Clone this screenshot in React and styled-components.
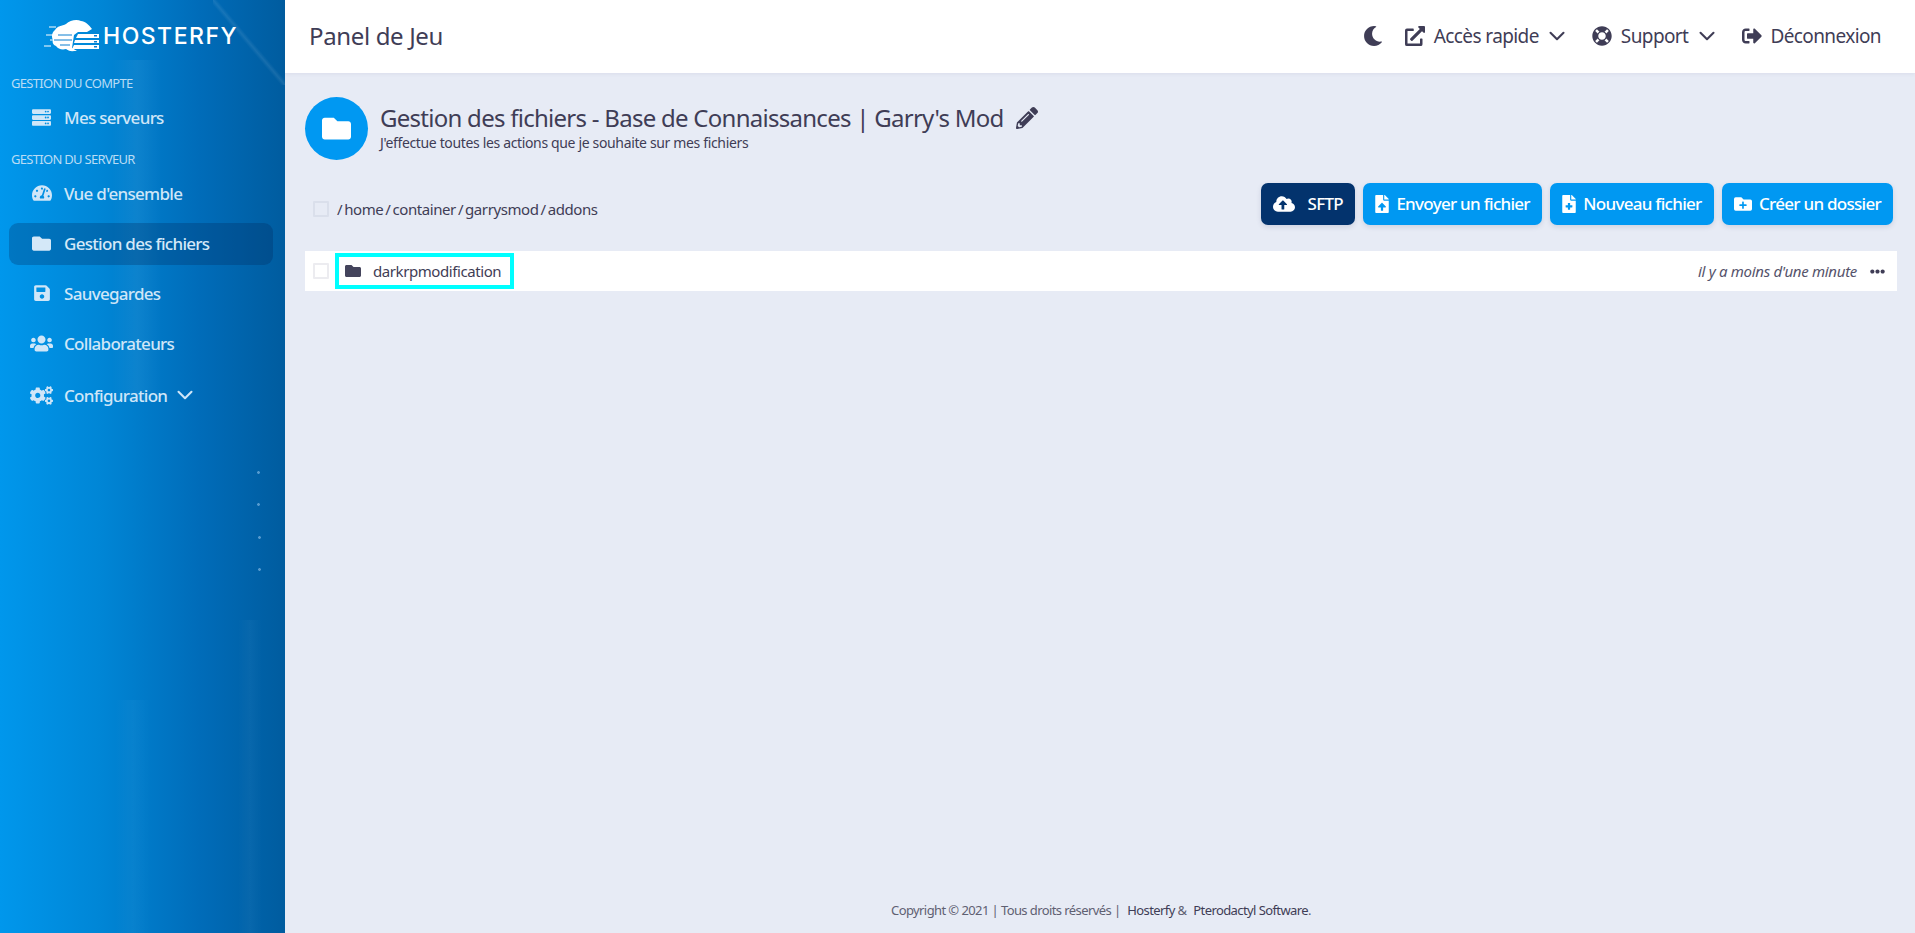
import React from 'react';
import styled, { createGlobalStyle } from 'styled-components';
import {
  FaMoon, FaExternalLinkAlt, FaLifeRing, FaSignOutAlt, FaServer, FaTachometerAlt, FaFolder,
  FaSave, FaUsers, FaCogs, FaCloudUploadAlt, FaFileUpload, FaFileMedical, FaFolderPlus,
  FaPencilAlt, FaEllipsisH,
} from 'react-icons/fa';
import { ChevronDown } from 'lucide-react';

const GlobalStyle = createGlobalStyle`
  html, body { margin: 0; padding: 0; height: 100%; }
  body { font-family: "Noto Sans", "Open Sans", sans-serif; background: #e7ebf5; color: #3f3d56; overflow: hidden; }
  * { box-sizing: border-box; }
`;

const Page = styled.div`
  display: flex;
  width: 1915px;
  height: 933px;
`;

const dot = 'radial-gradient(circle, rgba(190,225,255,0.45) 1px, transparent 1.7px)';

const Sidebar = styled.aside`
  width: 285px;
  flex: none;
  height: 100%;
  padding: 0 12px 0 9px;
  color: #cfe6f8;
  background:
    ${dot} 256px 470px / 5px 5px no-repeat,
    ${dot} 256px 502px / 5px 5px no-repeat,
    ${dot} 257px 535px / 5px 5px no-repeat,
    ${dot} 257px 567px / 5px 5px no-repeat,
    linear-gradient(to top right, transparent 47%, rgba(255,255,255,0.09) 50%, transparent 53%) 213px 0 / 72px 85px no-repeat,
    linear-gradient(90deg, transparent, rgba(255,255,255,0.03), transparent) 238px 620px / 24px 320px no-repeat,
    linear-gradient(90deg, transparent, rgba(255,255,255,0.03), transparent) 115px 700px / 36px 240px no-repeat,
    linear-gradient(90deg, transparent, rgba(255,255,255,0.05), transparent) 112px 60px / 50px 340px no-repeat,
    linear-gradient(90deg, #0097ec 0%, #0086d6 35%, #006cb9 70%, #005c9f 100%);
`;

const Brand = styled.div`
  height: 73px;
  display: flex;
  align-items: center;
  gap: 2px;
  margin-bottom: 2px;
  padding: 0 0 1px 35px;
`;

const BrandName = styled.span`
  font-family: "Inter", sans-serif;
  font-size: 23px;
  font-weight: 500;
  letter-spacing: 1.5px;
  color: #fff;
`;

const SectionLabel = styled.div`
  font-size: 13px;
  line-height: 16px;
  letter-spacing: -0.7px;
  color: #b9dcf5;
  margin: 0 0 6px;
  padding-left: 2px;
`;

const NavItem = styled.div`
  display: flex;
  align-items: center;
  height: 42px;
  margin-bottom: ${(p) => p.$gap ?? 8}px;
  padding: 0 0 2px 20px;
  border-radius: 9px;
  font-size: 17px;
  font-weight: 500;
  letter-spacing: -0.7px;
  color: ${(p) => (p.$active ? '#d4e8f8' : '#cfe6f8')};
  background: ${(p) => (p.$active ? 'rgba(0, 40, 90, 0.28)' : 'transparent')};
`;

const NavIcon = styled.span`
  width: 25px;
  margin-right: 10px;
  display: flex;
  align-items: center;
  justify-content: center;
  font-size: ${(p) => p.$size || 19}px;
  svg { flex: none; }
`;

const NavCaret = styled(ChevronDown)`
  margin-left: 5px;
`;

const Main = styled.main`
  flex: 1;
  min-width: 0;
  height: 100%;
  display: flex;
  flex-direction: column;
`;

const TopBar = styled.header`
  height: 73px;
  flex: none;
  background: #fff;
  box-shadow: 0 1px 4px rgba(60, 70, 110, 0.08);
  display: flex;
  align-items: center;
  justify-content: space-between;
  padding: 0 34px 2px 24px;
`;

const PanelTitle = styled.h1`
  margin: 0;
  font-size: 24px;
  font-weight: 400;
  letter-spacing: -0.35px;
  color: #3f3d56;
`;

const TopActions = styled.nav`
  display: flex;
  align-items: center;
`;

const TopAction = styled.div`
  display: flex;
  align-items: center;
  gap: 8.5px;
  margin-left: ${(p) => p.$left || 0}px;
  font-size: 19px;
  letter-spacing: -0.6px;
  color: #3f3d56;
  svg { flex: none; }
`;

const TopCaret = styled(ChevronDown)`
  margin-left: -3px;
`;

const Content = styled.div`
  flex: 1;
  display: flex;
  flex-direction: column;
  padding: 23px 18px 0 20px;
`;

const Heading = styled.section`
  display: flex;
  align-items: center;
  gap: 12px;
  height: 64px;
`;

const HeadingBadge = styled.div`
  width: 63px;
  height: 63px;
  border-radius: 50%;
  background: #0098f2;
  color: #fff;
  display: flex;
  align-items: center;
  justify-content: center;
  font-size: 29px;
`;

const HeadingText = styled.div`
  margin-bottom: 3px;
`;

const HeadingTitle = styled.h2`
  margin: 0 0 3px;
  display: flex;
  align-items: center;
  gap: 12px;
  font-size: 24px;
  line-height: 30px;
  font-weight: 400;
  letter-spacing: -0.73px;
  color: #3f3d56;
`;

const HeadingSub = styled.p`
  margin: 0;
  font-size: 14px;
  line-height: 14px;
  letter-spacing: -0.35px;
  color: #3f3d56;
`;

const Toolbar = styled.div`
  display: flex;
  align-items: center;
  justify-content: space-between;
  margin-top: 23px;
  padding-left: 8px;
  padding-right: 4px;
  height: 42px;
`;

const PathWrap = styled.div`
  display: flex;
  align-items: center;
  gap: 8px;
  font-size: 15px;
  letter-spacing: -0.42px;
  margin-top: 9px;
`;

const Checkbox = styled.span`
  width: 16px;
  height: 16px;
  flex: none;
  border: 2px solid ${(p) => (p.$light ? '#ececf0' : '#dadfeb')};
  background: transparent;
  border-radius: 1px;
`;

const Sep = styled.span`
  margin: 0 2px;
`;

const Buttons = styled.div`
  display: flex;
  gap: 8px;
`;

const Button = styled.div`
  height: 42px;
  padding: 0 12px 1px;
  display: flex;
  align-items: center;
  gap: ${(p) => (p.$dark ? 13 : 7.5)}px;
  border-radius: 7px;
  font-size: 17px;
  font-weight: 500;
  letter-spacing: -0.72px;
  color: #fff;
  background: ${(p) => (p.$dark ? '#03336d' : '#0098f2')};
  box-shadow: 0 2px 5px rgba(60, 70, 110, 0.15);
`;

const ButtonIcon = styled.span`
  width: ${(p) => p.$w}px;
  display: flex;
  justify-content: center;
  font-size: ${(p) => p.$size || 18}px;
  svg { flex: none; }
`;

const FileRow = styled.div`
  margin-top: 26px;
  height: 40px;
  background: #fff;
  display: flex;
  align-items: center;
  justify-content: space-between;
  padding: 0 12px 0 8px;
`;

const FileLeft = styled.div`
  display: flex;
  align-items: center;
  gap: 6px;
`;

const FileName = styled.div`
  display: flex;
  align-items: center;
  gap: 12px;
  height: 36px;
  padding: 0 9px 1px 6px;
  border: 4px solid #00ffff;
  font-size: 15px;
  letter-spacing: -0.42px;
  color: #3f3d56;
  svg { color: #44445c; }
`;

const FileMeta = styled.div`
  display: flex;
  align-items: center;
  gap: 13px;
  font-size: 15px;
  font-style: italic;
  letter-spacing: -0.3px;
  color: #55536b;
  svg { color: #3f3d56; }
`;

const Footer = styled.footer`
  margin-top: auto;
  height: 43px;
  display: flex;
  justify-content: center;
  font-size: 13px;
  letter-spacing: -0.59px;
  line-height: 40px;
  color: #5f6072;
`;

const FooterLink = styled.span`
  color: #3f3d56;
  margin-left: 4px;
`;

const Logo = () => (
  <svg width="57" height="33" viewBox="0 0 57 33" aria-hidden="true">
    <path fill="#fff" d="M11 10C13 6 18 6 22 4C26 0 33-1 37 1C41 1 45 5 48 9L43 12H34L30 15L28 28L33 31C28 31 26 32 22 29C18 30 14 29 12 26C9 25 8 22 9 20C7 17 8 12 11 10Z" />
    <path fill="#fff" d="M34 14H55V18H32ZM31 20H55V23H30ZM30 25H55V29H28Z" />
    <path stroke="#fff" strokeWidth="1" d="M5 7h7M2 15h8M6 20h4M0 26h7" />
    <path stroke="#0a7fd0" strokeWidth="1" fill="none" d="M14 15h14M10 20h18M16 25h10" />
    <path fill="#0a7fd0" d="M50 15h3v1.5h-3zM50 21h3v1.5h-3zM50 26h3v1.5h-3z" />
  </svg>
);

export default function App() {
  return (
    <Page>
      <GlobalStyle />
      <Sidebar>
        <Brand>
          <Logo />
          <BrandName>HOSTERFY</BrandName>
        </Brand>
        <SectionLabel>GESTION DU COMPTE</SectionLabel>
        <NavItem $gap={12}><NavIcon><FaServer /></NavIcon>Mes serveurs</NavItem>
        <SectionLabel>GESTION DU SERVEUR</SectionLabel>
        <NavItem><NavIcon $size={20}><FaTachometerAlt /></NavIcon>Vue d'ensemble</NavItem>
        <NavItem $active><NavIcon><FaFolder /></NavIcon>Gestion des fichiers</NavItem>
        <NavItem><NavIcon $size={18}><FaSave /></NavIcon>Sauvegardes</NavItem>
        <NavItem $gap={10}><NavIcon $size={23}><FaUsers /></NavIcon>Collaborateurs</NavItem>
        <NavItem>
          <NavIcon $size={23}><FaCogs /></NavIcon>Configuration
          <NavCaret size={26} strokeWidth={1.9} />
        </NavItem>
      </Sidebar>
      <Main>
        <TopBar>
          <PanelTitle>Panel de Jeu</PanelTitle>
          <TopActions>
            <TopAction><FaMoon size={20} /></TopAction>
            <TopAction $left={22}><FaExternalLinkAlt size={20} />Accès rapide<TopCaret size={26} strokeWidth={1.9} /></TopAction>
            <TopAction $left={22}><FaLifeRing size={20} />Support<TopCaret size={26} strokeWidth={1.9} /></TopAction>
            <TopAction $left={22}><FaSignOutAlt size={20} />Déconnexion</TopAction>
          </TopActions>
        </TopBar>
        <Content>
          <Heading>
            <HeadingBadge><FaFolder /></HeadingBadge>
            <HeadingText>
              <HeadingTitle>Gestion des fichiers - Base de Connaissances | Garry's Mod <FaPencilAlt size={22} /></HeadingTitle>
              <HeadingSub>J'effectue toutes les actions que je souhaite sur mes fichiers</HeadingSub>
            </HeadingText>
          </Heading>
          <Toolbar>
            <PathWrap>
              <Checkbox />
              <span>/<Sep>home</Sep>/<Sep>container</Sep>/<Sep>garrysmod</Sep>/<Sep>addons</Sep></span>
            </PathWrap>
            <Buttons>
              <Button $dark><ButtonIcon $w={22} $size={22}><FaCloudUploadAlt /></ButtonIcon>SFTP</Button>
              <Button><ButtonIcon $w={14}><FaFileUpload /></ButtonIcon>Envoyer un fichier</Button>
              <Button><ButtonIcon $w={14}><FaFileMedical /></ButtonIcon>Nouveau fichier</Button>
              <Button><ButtonIcon $w={18}><FaFolderPlus /></ButtonIcon>Créer un dossier</Button>
            </Buttons>
          </Toolbar>
          <FileRow>
            <FileLeft>
              <Checkbox $light />
              <FileName><FaFolder size={16} />darkrpmodification</FileName>
            </FileLeft>
            <FileMeta>il y a moins d'une minute <FaEllipsisH size={15} /></FileMeta>
          </FileRow>
          <Footer>
            <span>Copyright © 2021 | Tous droits réservés | <FooterLink>Hosterfy</FooterLink> &amp; <FooterLink>Pterodactyl Software</FooterLink>.</span>
          </Footer>
        </Content>
      </Main>
    </Page>
  );
}
